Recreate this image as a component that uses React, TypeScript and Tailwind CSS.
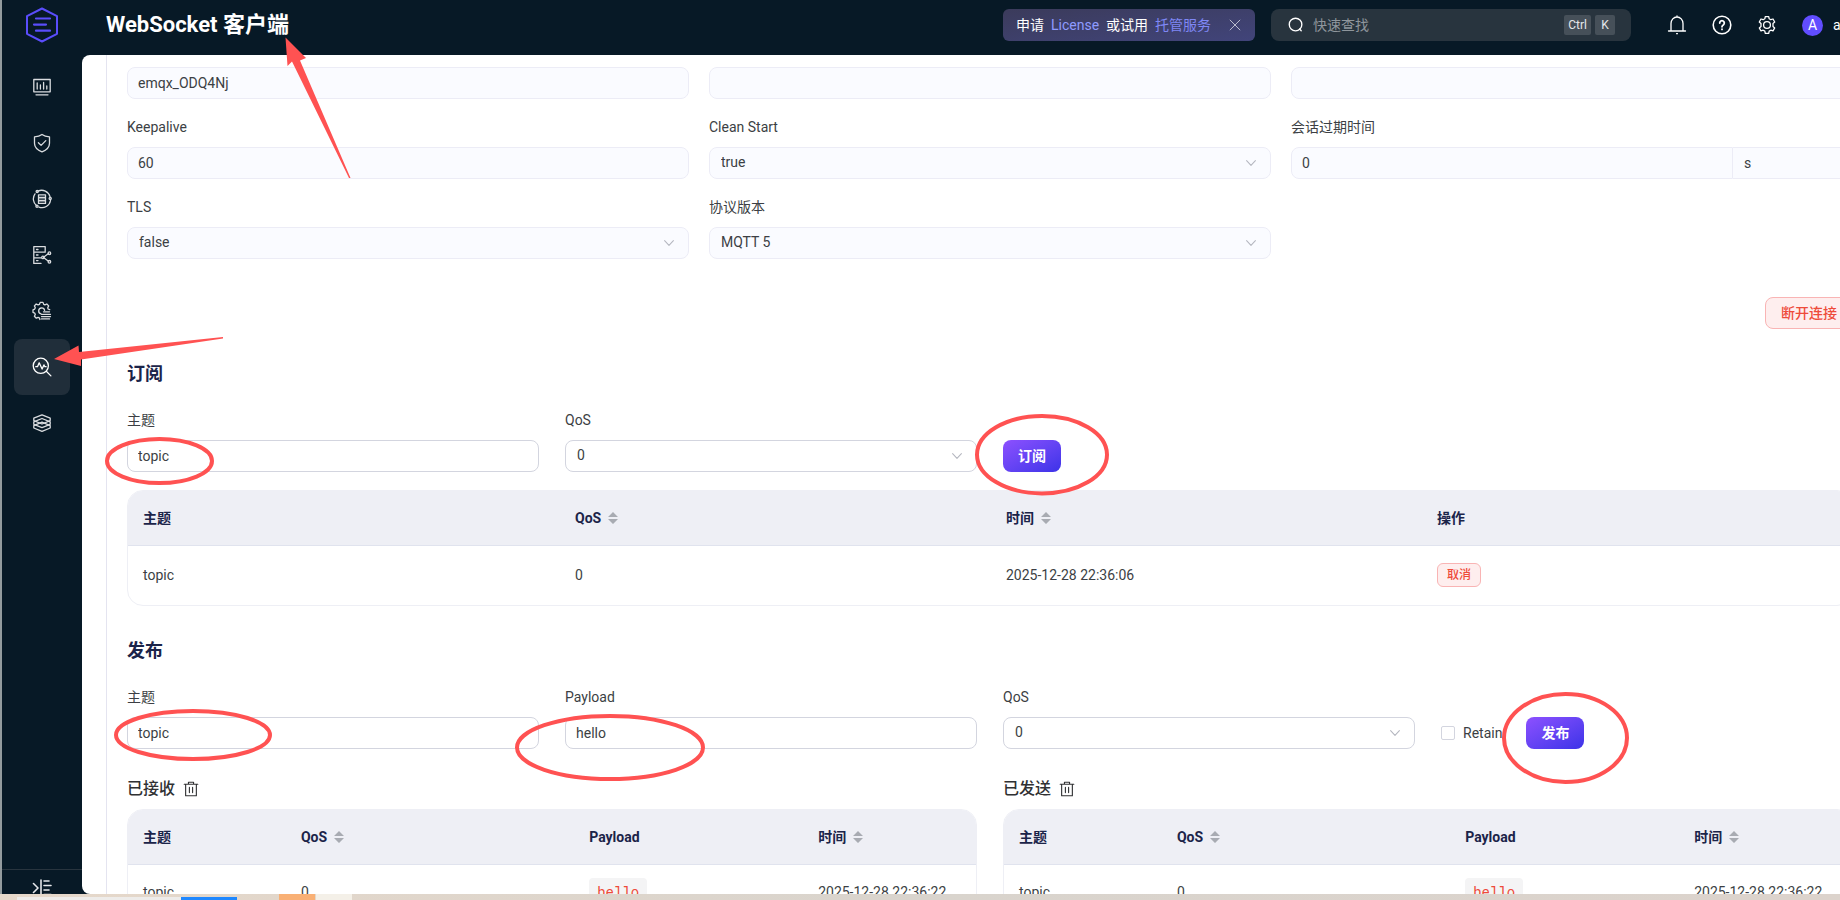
import type { ReactNode } from "react";
import clsx from "clsx";

const fieldBase = "h-8 w-full rounded-lg border text-sm outline-none";
const fieldDisabled = "border-[#ececf6] bg-[#fafbff] text-[#3c3f44]";
const fieldActive = "border-[#d3d5df] bg-white text-[#3c3f44]";
const labelText = "text-sm leading-5 text-[#3c3f44]";

function Icon({ children, className = "size-5", width = 1.3 }: { children: ReactNode; className?: string; width?: number }) {
  return (
    <svg
      viewBox="0 0 20 20"
      className={clsx("shrink-0", className)}
      fill="none"
      stroke="currentColor"
      strokeWidth={width}
      strokeLinecap="round"
      strokeLinejoin="round"
      aria-hidden="true"
    >
      {children}
    </svg>
  );
}

const gearPath =
  "M8.3 1.6h3.4l.5 2.2 1.6.9 2.2-.7 1.7 3-1.7 1.5v2.9l1.7 1.5-1.7 3-2.2-.7-1.6.9-.5 2.3H8.3l-.5-2.3-1.6-.9-2.2.7-1.7-3L4 11.4V8.5L2.3 7 4 4l2.2.7 1.6-.9z";

const navItems = [
  {
    label: "监控",
    icon: (
      <>
        <path d="M1.8 2.5h16.4v12.3H1.8zM4 17.8h12" />
        <path d="M5.2 6v6M8.4 8v4M11.6 5.5V12M14.8 9v3" />
      </>
    ),
  },
  {
    label: "访问控制",
    icon: (
      <>
        <path d="M10 1.4c2 1.6 4.5 2.3 7.5 2.4v6.4c0 4-3 6.8-7.5 8.6-4.5-1.8-7.5-4.6-7.5-8.6V3.8c3-.1 5.5-.8 7.5-2.4z" />
        <path d="M6.4 9.8l2.7 2.6 4.7-4.8" />
      </>
    ),
  },
  {
    label: "集成",
    icon: (
      <>
        <path d="M6 2.1a8.6 8.6 0 0 1 12 5.6M18.5 11.5A8.6 8.6 0 0 1 7 18.1M4.4 16.5A8.6 8.6 0 0 1 3 4.9" />
        <circle cx="5.2" cy="2.6" r="1.1" />
        <circle cx="18.2" cy="9.6" r="1.1" />
        <circle cx="5" cy="17.3" r="1.1" />
        <path d="M6.5 5.8h7v2.6h-7zM6.5 8.8h7v2.6h-7zM6.5 11.8h7v2.6h-7z" />
      </>
    ),
  },
  {
    label: "连接管理",
    icon: (
      <>
        <path d="M13.2 6.5V1.6H1.8v16.8H9M1.8 7.2h11.4M1.8 12.8H9M4.5 4.500h1.5M4.5 10h1.5M4.500 15.600h1.500" />
        <path d="M11.5 12.300l5-3.700M11.500 12.600l5 3.700" />
        <circle cx="10.9" cy="12.4" r="1.2" />
        <circle cx="17.4" cy="8.2" r="1.3" />
        <circle cx="17.4" cy="16.8" r="1.3" />
      </>
    ),
  },
  {
    label: "管理",
    icon: (
      <>
        <path d="M17.7 8.7L16 8l-.2-1.400.9-1.700-1.900-1.900-1.900.9-1.200-.5-.7-2H8.200l-.8 2-1.300.5-1.900-.9-1.800 1.900.9 1.900-.6 1.300-1.700.7v2.600l1.700.7.6 1.400-.9 1.800 1.900 1.900 1.800-.9 1.200.5.6 1.700" />
        <path d="M12.6 9.3a3 3 0 1 0-3.6 3.6" />
        <path d="M11.5 10.8h6M9.500 13.300h9M9.500 15.600h9M9.500 17.900h8" />
      </>
    ),
  },
  {
    label: "问题分析",
    active: true,
    icon: (
      <>
        <circle cx="8.8" cy="8.8" r="7.6" />
        <path d="M14.3 14.3l4.600 4.600M3.800 9.700h1.700l1.700-3.900 2.900 6.300 1.800-4.200 1 1.800h1.200" />
      </>
    ),
  },
  {
    label: "系统设置",
    icon: (
      <>
        <path d="M10 1.800l8.200 3.400v2.400L10 11 1.800 7.600V5.200z" />
        <path d="M10 5.500l8.200 3.400v2.400L10 14.700l-8.200-3.400V8.900z" />
        <path d="M10 9.200l8.200 3.400V15L10 18.400 1.800 15v-2.400z" />
      </>
    ),
  },
];

function Chevron() {
  return (
    <Icon className="pointer-events-none absolute right-3 top-2 size-4 text-[#b4b6bf]" width={1.3}>
      <path d="M4.500 7l5.500 6L15.500 7" />
    </Icon>
  );
}

interface FieldProps {
  id: string;
  label: string;
  value: string;
  disabled?: boolean;
  select?: boolean;
}

function Field({ id, label, value, disabled, select }: FieldProps) {
  return (
    <div className="flex min-w-0 flex-col gap-[10px]">
      <label htmlFor={id} className={labelText}>
        {label}
      </label>
      {select ? (
        <div className="relative">
          <select
            id={id}
            disabled={disabled}
            defaultValue={value}
            className={clsx(fieldBase, "appearance-none px-[11px] pb-[2px] opacity-100", disabled ? fieldDisabled : fieldActive)}
          >
            <option>{value}</option>
          </select>
          <Chevron />
        </div>
      ) : (
        <input
          id={id}
          disabled={disabled}
          defaultValue={value}
          className={clsx(fieldBase, "px-[10px]", disabled ? fieldDisabled : fieldActive)}
        />
      )}
    </div>
  );
}

function Sortable({ children }: { children: ReactNode }) {
  return (
    <button className="flex items-center gap-[7px] font-bold">
      {children}
      <svg viewBox="0 0 10 12" className="h-3 w-[10px] fill-[#a8abb2]" aria-hidden="true">
        <path d="M5 0l5 5H0zM5 12l5-5H0z" />
      </svg>
    </button>
  );
}

function PrimaryButton({ children }: { children: ReactNode }) {
  return (
    <button className="h-8 w-[58px] rounded-lg bg-linear-to-br from-[#8d50ff] to-[#3c32e8] text-sm font-bold text-white">
      {children}
    </button>
  );
}

const th = "h-[54px] pl-4 text-left font-bold first:pl-[15px]";
const td = "pl-4 first:pl-[15px]";

function MessageTable({ title }: { title: string }) {
  return (
    <section>
      <div className="flex items-center gap-2 text-base leading-6 font-medium text-[#303133]">
        <h3>{title}</h3>
        <button aria-label="清空">
          <Icon className="size-4" width={1.4}>
            <path d="M1.500 4h17M6.800 4V1.500h6.400V4M3.300 4v14.500h13.400V4M8 8v6.500M12 8v6.500" />
          </Icon>
        </button>
      </div>
      <div className="mt-2 overflow-hidden rounded-2xl border border-[#eeeff5]">
        <table className="w-full table-fixed text-sm text-[#3c3f44]">
          <thead className="border-b border-[#e0e3ee] bg-[#eeeff5] text-[#1b2449]">
            <tr>
              <th className={clsx(th, "w-[18.5%]")}>主题</th>
              <th className={clsx(th, "w-[34%]")}>
                <Sortable>QoS</Sortable>
              </th>
              <th className={clsx(th, "w-[27%]")}>Payload</th>
              <th className={th}>
                <Sortable>时间</Sortable>
              </th>
            </tr>
          </thead>
          <tbody>
            <tr className="h-14">
              <td className={td}>topic</td>
              <td className={td}>0</td>
              <td className={td}>
                <code className="rounded bg-[#f4f4f5] px-2 py-1 font-[Roboto_Mono,Liberation_Mono,monospace] text-sm text-[#ee4b3a]">hello</code>
              </td>
              <td className={td}>2025-12-28 22:36:22</td>
            </tr>
          </tbody>
        </table>
      </div>
    </section>
  );
}

function Sidebar() {
  return (
    <aside className="flex w-20 shrink-0 flex-col">
      <nav className="flex flex-1 flex-col items-center pt-1">
        {navItems.map((item) => (
          <a
            key={item.label}
            href="#"
            aria-label={item.label}
            className={clsx(
              "flex size-14 items-center justify-center rounded-lg",
              item.active ? "bg-[#202e3a] text-white" : "text-[#d9dcdf]",
            )}
          >
            <Icon>{item.icon}</Icon>
          </a>
        ))}
      </nav>
      <button aria-label="展开菜单" className="flex h-[25px] shrink-0 justify-center overflow-hidden border-t border-[#28343e] pt-2 text-[#e5e7ea]">
        <Icon width={1.6}>
          <path d="M1.500 5.500L6 10l-4.500 4.500M9 2v16M12 3h5M12 7.500h7M12 12h5M12 16.500h7" />
        </Icon>
      </button>
    </aside>
  );
}

function Header() {
  return (
    <header className="flex h-[55px] shrink-0 items-center pb-[5px] text-white">
      <div className="flex w-20 shrink-0 justify-center">
        <svg viewBox="0 0 32 36" className="h-9 w-8" fill="none" stroke="#5a4dfb" strokeWidth="2" strokeLinecap="round" strokeLinejoin="round" aria-label="EMQX">
          <path d="M16 1.500L31 9.200v17.600l-15 7.700L1 26.800V9.200z" />
          <path d="M10 11.500h14M8 17.600h12M10 23.700h14" strokeWidth="2.2" />
        </svg>
      </div>
      <h1 className="ml-6 text-[22px] leading-8 font-bold">WebSocket 客户端</h1>
      <div className="mr-4 ml-auto flex h-8 w-[252px] shrink-0 items-center justify-between rounded-md bg-linear-to-br from-[#3b3b5b] to-[#41447a] px-[13px] text-sm">
        <p className="flex gap-[7px] whitespace-nowrap">
          申请
          <a href="#" className="text-[#8f9bff]">License</a>
          或试用
          <a href="#" className="text-[#7f87f5]">托管服务</a>
        </p>
        <button aria-label="关闭" className="text-[#c7c9d8]">
          <Icon className="size-[14px]">
            <path d="M3 3l14 14M17 3L3 17" />
          </Icon>
        </button>
      </div>
      <label className="flex h-8 w-[360px] shrink-0 items-center gap-1 rounded-lg bg-[#28343e] px-4 text-sm">
        <Icon className="mr-1 size-[18px]" width={1.5}>
          <circle cx="9.5" cy="9.5" r="7" />
          <path d="M14 14.500l1.800 1.900" />
        </Icon>
        <input placeholder="快速查找" aria-label="快速查找" className="min-w-0 flex-1 bg-transparent outline-none placeholder:text-[#8f969c]" />
        <kbd className="flex h-5 items-center rounded-xs bg-[#465059] px-1 font-[Roboto,sans-serif] text-xs text-[#e5e7ea]">Ctrl</kbd>
        <kbd className="flex size-5 items-center justify-center rounded-xs bg-[#465059] font-[Roboto,sans-serif] text-xs text-[#e5e7ea]">K</kbd>
      </label>
      <div className="ml-9 flex shrink-0 items-center gap-[25px]">
        <button aria-label="通知">
          <Icon width={1.3}>
            <path d="M1.500 16h17M4 16V8.500a6 6.500 0 0 1 12 0V16M10 2V1M9.600 18.700h.8" />
          </Icon>
        </button>
        <button aria-label="帮助">
          <Icon width={1.6}>
            <circle cx="10" cy="10" r="8.8" />
            <path d="M7.700 8a2.300 2.300 0 1 1 3.600 1.900c-.8.600-1.300 1-1.300 1.900M10 14.200v.2" strokeWidth={1.8} />
          </Icon>
        </button>
        <button aria-label="设置">
          <Icon width={1.3}>
            <path d={gearPath} />
            <circle cx="10" cy="10" r="3.4" />
          </Icon>
        </button>
        <button className="flex items-center gap-[10px] text-sm">
          <span className="flex size-[21px] items-center justify-center rounded-full bg-[#614dff]">A</span>
          <span className="w-[7px] overflow-hidden">a</span>
        </button>
      </div>
    </header>
  );
}

function ConnectionForm() {
  return (
    <form>
      <div className="grid grid-cols-3 gap-x-5 gap-y-[18px]">
        <input aria-label="用户名" disabled defaultValue="emqx_ODQ4Nj" className={clsx(fieldBase, fieldDisabled, "px-[10px]")} />
        <input aria-label="密码" disabled className={clsx(fieldBase, fieldDisabled, "px-[10px]")} />
        <input aria-label="Client ID" disabled className={clsx(fieldBase, fieldDisabled, "px-[10px]")} />
        <Field id="keepalive" label="Keepalive" value="60" disabled />
        <Field id="clean-start" label="Clean Start" value="true" disabled select />
        <div className="flex min-w-0 flex-col gap-[10px]">
          <label htmlFor="expiry" className={labelText}>会话过期时间</label>
          <div className="flex">
            <input id="expiry" disabled defaultValue="0" className={clsx(fieldBase, fieldDisabled, "min-w-0 flex-1 rounded-r-none px-[10px]")} />
            <select aria-label="单位" disabled className="h-8 w-[120px] appearance-none rounded-r-lg border border-l-0 border-[#ececf6] bg-[#fafbff] px-[11px] text-sm text-[#3c3f44] opacity-100">
              <option>s</option>
            </select>
          </div>
        </div>
        <Field id="tls" label="TLS" value="false" disabled select />
        <Field id="protocol" label="协议版本" value="MQTT 5" disabled select />
      </div>
      <div className="mt-[38px] flex justify-end">
        <button type="button" className="h-8 w-[88px] rounded-lg border border-[#f9b4b4] bg-[#feeeee] text-sm font-medium text-[#ee4b3a]">断开连接</button>
      </div>
    </form>
  );
}

function Subscription() {
  return (
    <section className="mt-[33px]">
      <h2 className="text-lg leading-6 font-bold text-[#1b2449]">订阅</h2>
      <form className="mt-6 grid grid-cols-4 items-end gap-x-[26px]">
        <Field id="sub-topic" label="主题" value="topic" />
        <Field id="sub-qos" label="QoS" value="0" select />
        <PrimaryButton>订阅</PrimaryButton>
      </form>
      <div className="mt-[18px] overflow-hidden rounded-2xl border border-[#eeeff5]">
        <table className="w-full table-fixed text-sm text-[#3c3f44]">
          <thead className="border-b border-[#e0e3ee] bg-[#eeeff5] text-[#1b2449]">
            <tr>
              <th className={th}>主题</th>
              <th className={th}><Sortable>QoS</Sortable></th>
              <th className={th}><Sortable>时间</Sortable></th>
              <th className={th}>操作</th>
            </tr>
          </thead>
          <tbody>
            <tr className="h-[60px]">
              <td className={td}>topic</td>
              <td className={td}>0</td>
              <td className={td}>2025-12-28 22:36:06</td>
              <td className={td}>
                <button className="flex h-6 w-11 items-center justify-center rounded-md border border-[#f9b4b4] bg-[#feeeee] text-xs font-medium text-[#ee4b3a]">取消</button>
              </td>
            </tr>
          </tbody>
        </table>
      </div>
    </section>
  );
}

function Publishing() {
  return (
    <section className="mt-[33px]">
      <h2 className="text-lg leading-6 font-bold text-[#1b2449]">发布</h2>
      <form className="mt-6 grid grid-cols-4 items-end gap-x-[26px]">
        <Field id="pub-topic" label="主题" value="topic" />
        <Field id="pub-payload" label="Payload" value="hello" />
        <Field id="pub-qos" label="QoS" value="0" select />
        <div className="flex h-8 items-center gap-6">
          <label className="flex items-center gap-2 text-sm text-[#3c3f44]">
            <input type="checkbox" className="size-[14px] appearance-none rounded-xs border border-[#d3d5df] bg-white" />
            Retain
          </label>
          <PrimaryButton>发布</PrimaryButton>
        </div>
      </form>
      <div className="mt-7 grid grid-cols-2 gap-x-[26px]">
        <MessageTable title="已接收" />
        <MessageTable title="已发送" />
      </div>
    </section>
  );
}

// red pen marks drawn over the page
function Annotations() {
  return (
    <svg className="pointer-events-none absolute inset-0 size-full" aria-hidden="true">
      <g fill="#ff5252">
        <path d="M285.500 37.500L306 58l-6 2.500 50.500 117.500h-1.500L292 61.500l-4.500 4.500z" />
        <path d="M54 359l24.500-13.500.5 6.500 144-15v1.500L81 359.500v6.500z" />
      </g>
      <g fill="none" stroke="#ff5252" strokeWidth="4">
        <ellipse cx="159.5" cy="461" rx="52.5" ry="22" />
        <ellipse cx="1042" cy="454.7" rx="65" ry="38.7" />
        <ellipse cx="193" cy="735" rx="77" ry="24" />
        <ellipse cx="610" cy="747.5" rx="93" ry="31.5" />
        <ellipse cx="1565.5" cy="738" rx="61.5" ry="44" />
      </g>
    </svg>
  );
}

export default function App() {
  return (
    <div className="relative flex h-screen flex-col overflow-hidden bg-[#e2d7cd] font-[Roboto,'Noto_Sans_CJK_SC',sans-serif]">
      <div className="flex min-h-0 flex-1 flex-col border-l-2 border-[#939b9e] bg-[#071926]">
        <Header />
        <div className="flex min-h-0 flex-1">
          <Sidebar />
          <main className="min-w-0 flex-1 overflow-hidden rounded-l-lg bg-white pl-6">
            {/* the card runs past the right edge of the window */}
            <div className="-mr-[33px] border-l border-[#e4e4f0] px-5 pt-3">
              <ConnectionForm />
              <Subscription />
              <Publishing />
            </div>
          </main>
        </div>
      </div>
      <footer className="flex h-[6px] shrink-0 items-end bg-linear-to-r from-[#e6d8ca] via-[#d9d4cd] to-[#dcd3cc] pl-[17px]">
        <div className="h-[3px] w-[164px] bg-[#eeecea]" />
        <div className="mr-[42px] h-[3px] w-14 bg-[#1f88ff]" />
        <div className="mr-px h-full w-9 bg-[#f9b075]" />
        <div className="h-full w-9 bg-[#f4f0e8]" />
      </footer>
      <Annotations />
    </div>
  );
}
